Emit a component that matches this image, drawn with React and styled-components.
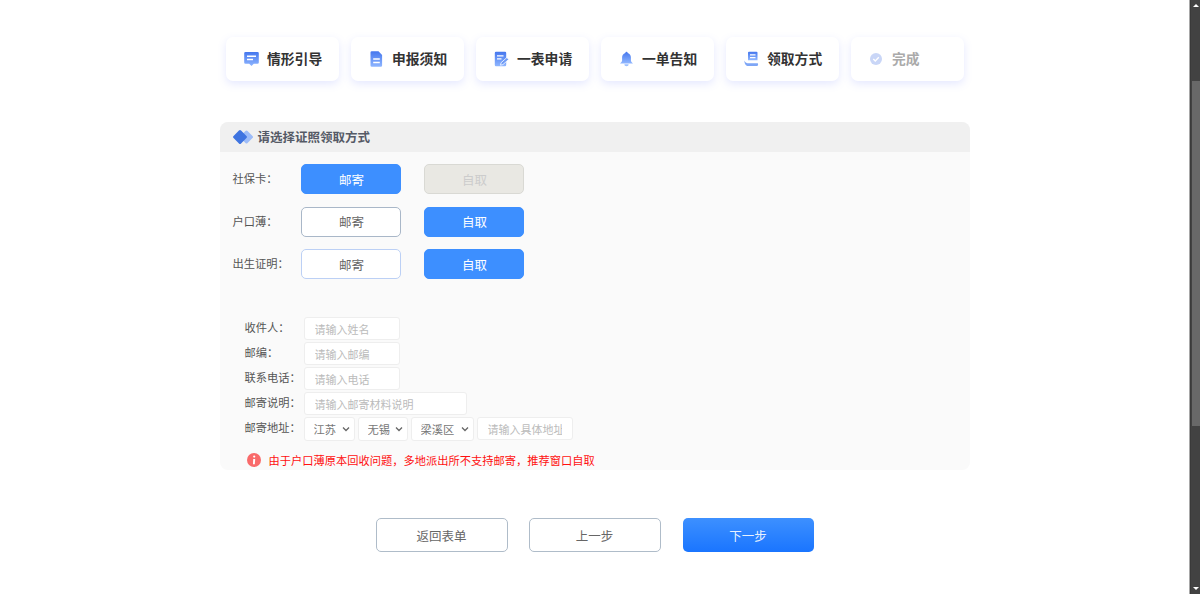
import React from 'react'
import styled, { createGlobalStyle } from 'styled-components'

const GlobalStyle = createGlobalStyle`
  html, body {
    margin: 0;
    padding: 0;
    height: 594px;
    overflow: hidden;
    background: #fff;
    font-family: "Noto Sans CJK SC", "Noto Sans", sans-serif;
  }
  * { box-sizing: border-box; }
`

const chevron = `url("data:image/svg+xml,%3Csvg xmlns='http://www.w3.org/2000/svg' width='8' height='6' viewBox='0 0 8 6'%3E%3Cpath d='M1 1.500l3 3 3-3' fill='none' stroke='%23666' stroke-width='1.300'/%3E%3C/svg%3E")`

const Page = styled.div`
  display: flex;
  width: 1200px;
  height: 594px;
`

const Main = styled.main`
  flex: 1;
  display: flex;
  flex-direction: column;
  align-items: center;
  padding-top: 37px;
  border-right: 1px solid #a8a8a8;
`

const Steps = styled.div`
  display: flex;
  gap: 12px;
  margin-left: 1px;
`

const StepCard = styled.div`
  display: flex;
  align-items: center;
  gap: 8px;
  width: 113px;
  height: 44px;
  padding-left: 18px;
  border-radius: 7px;
  background: #fff;
  box-shadow: 0 3px 8px rgba(110, 130, 255, 0.18);
  font-size: 13.8px;
  font-weight: 700;
  color: ${({ $done }) => ($done ? '#aaa' : '#333')};
  svg { flex: none; width: 15px; height: 16px; }
  span { padding-bottom: 2px; }
`

const Panel = styled.section`
  width: 750px;
  height: 348px;
  margin-top: 41px;
  border-radius: 8px;
  background: #fafafa;
  overflow: hidden;
`

const PanelHead = styled.div`
  display: flex;
  align-items: center;
  gap: 5px;
  height: 30px;
  padding: 0 0 1px 13px;
  background: #f0f0f0;
  font-size: 12.5px;
  font-weight: 700;
  color: #555a66;
`

const Picks = styled.div`
  display: flex;
  flex-direction: column;
  gap: 12.5px;
  padding: 12px 0 0 13px;
`

const PickRow = styled.div`
  display: flex;
  align-items: center;
`

const PickLabel = styled.span`
  width: 68px;
  font-size: 11.25px;
  color: #555;
  position: relative;
  top: -1px;
`

const Pick = styled.button`
  width: 100px;
  height: 30px;
  margin-right: 23px;
  padding: 0 0 0 2px;
  border-radius: 5px;
  font-family: inherit;
  font-size: 12.5px;
  border: 1px solid ${({ $variant, $line }) =>
    $variant === 'on' ? '#3d8fff' : $variant === 'off' ? '#d9d9d4' : $line || '#a9b7c8'};
  background: ${({ $variant }) =>
    $variant === 'on' ? '#3d8fff' : $variant === 'off' ? '#e9e8e3' : '#fff'};
  color: ${({ $variant }) =>
    $variant === 'on' ? '#fff' : $variant === 'off' ? '#ccc' : '#666'};
`

const Form = styled.div`
  display: flex;
  flex-direction: column;
  gap: 2px;
  margin-top: 38px;
  padding-left: 25px;
`

const FormRow = styled.div`
  display: flex;
  align-items: center;
  gap: 3px;
  height: 23px;
`

const FormLabel = styled.label`
  width: 59px;
  margin-right: -3px;
  font-size: 11.25px;
  white-space: nowrap;
  color: #555;
  position: relative;
  top: -2px;
`

const Field = styled.input`
  width: ${({ $w }) => $w || 96}px;
  height: 23px;
  padding: 0 10px;
  border: 1px solid #eee;
  border-radius: 3px;
  background: #fff;
  font-family: inherit;
  font-size: 11px;
  outline: none;
  &::placeholder { color: #bbb; opacity: 1; }
`

const AreaSelect = styled.select`
  appearance: none;
  width: ${({ $w }) => $w}px;
  height: 24px;
  padding-left: 9px;
  border: 1px solid #eee;
  border-radius: 3px;
  background: #fff ${chevron} no-repeat right 4px center;
  font-family: inherit;
  font-size: 11.25px;
  color: #777;
`

const Notice = styled.div`
  display: flex;
  align-items: center;
  gap: 8px;
  margin-top: 10px;
  padding-left: 2px;
  font-size: 11.25px;
  color: #ff1010;
`

const Actions = styled.div`
  display: flex;
  gap: 21px;
  margin-top: 48px;
`

const ActionButton = styled.button`
  width: ${({ $primary }) => ($primary ? 131 : 132)}px;
  height: 34px;
  margin-left: ${({ $primary }) => ($primary ? 1 : 0)}px;
  padding: 0;
  border-radius: 5px;
  font-family: inherit;
  font-size: 12.5px;
  color: ${({ $primary }) => ($primary ? '#e8f1ff' : '#666')};
  border: ${({ $primary }) => ($primary ? 'none' : '1px solid #afbcc9')};
  background: ${({ $primary }) =>
    $primary ? 'linear-gradient(180deg, #3d90ff 0%, #1a75ff 100%)' : '#fff'};
`

const ScrollTrack = styled.aside`
  flex: none;
  display: flex;
  flex-direction: column;
  align-items: center;
  width: 10px;
  background: #424242;
  border-left: 1px solid #3a3a3a;
`

const ScrollArrow = styled.div`
  width: 0;
  height: 0;
  margin: 4px 0;
  border-left: 3px solid transparent;
  border-right: 3px solid transparent;
  ${({ $down }) => ($down ? 'border-top: 3px solid #fff;' : 'border-bottom: 3px solid #fff;')}
`

const ScrollThumb = styled.div`
  width: 8px;
  height: 345px;
  margin-top: 70px;
  margin-bottom: auto;
  background: #686868;
`

const Grad = ({ id, from = '#4577ee', to = '#8fb6ff' }) => (
  <defs>
    <linearGradient id={id} x1="0" y1="0" x2="0" y2="1">
      <stop offset="0" stopColor={from} />
      <stop offset="1" stopColor={to} />
    </linearGradient>
  </defs>
)

const icons = {
  talk: (
    <svg viewBox="0 0 15 16">
      <Grad id="g1" />
      <path d="M1.500 1h12a1.300 1.300 0 0 1 1.300 1.300v9.200a1.300 1.300 0 0 1-1.300 1.300H9.800l-2.300 2.300-2.300-2.300H1.500A1.300 1.300 0 0 1 .2 11.500V2.300A1.300 1.300 0 0 1 1.500 1z" fill="url(#g1)" />
      <path d="M3 4.500h9v1.400H3zM3 7.800h6v1.400H3z" fill="#fff" />
    </svg>
  ),
  doc: (
    <svg viewBox="0 0 15 16">
      <Grad id="g2" />
      <path d="M2.800 .3h6.700l3.600 3.600v10.500a1.300 1.300 0 0 1-1.300 1.300H2.800a1.300 1.300 0 0 1-1.300-1.300V1.600A1.300 1.300 0 0 1 2.800 .3z" fill="url(#g2)" />
      <path d="M4.200 7.300h6.600v1.400H4.200zM4.200 10.800h6.600v1.400H4.200z" fill="#fff" />
    </svg>
  ),
  form: (
    <svg viewBox="0 0 15 16">
      <Grad id="g3" />
      <path d="M2 .8h9a1.200 1.200 0 0 1 1.200 1.200v12a1.200 1.200 0 0 1-1.200 1.200H2A1.200 1.200 0 0 1 .8 14V2A1.200 1.200 0 0 1 2 .8z" fill="url(#g3)" />
      <path d="M3 4.300h6.500v1.300H3zM3 7.300h4.500v1.300H3z" fill="#fff" />
      <path d="M6.500 14.200l.6-2.500 5.800-5.200 1.800 1.900-5.800 5.200z" fill="#6f9bf5" stroke="#fff" strokeWidth=".8" />
    </svg>
  ),
  bell: (
    <svg viewBox="0 0 15 16">
      <Grad id="g4" />
      <path d="M7.500 .8c.7 0 1.100.4 1.200 1.100 2.100.6 3.200 2.300 3.200 4.400v3.100c0 1 1 1.800 2.100 3H1c1.100-1.200 2.100-2 2.100-3V6.300c0-2.100 1.100-3.800 3.200-4.400C6.400 1.200 6.800 .8 7.500 .8z" fill="url(#g4)" />
      <path d="M5.300 13.200h4.400a2.200 2 0 0 1-4.400 0z" fill="#9cc0ff" />
    </svg>
  ),
  hand: (
    <svg viewBox="0 0 15 16">
      <Grad id="g5" />
      <path d="M5 .8h7.500a1 1 0 0 1 1 1v7.400H4V1.800a1 1 0 0 1 1-1z" fill="url(#g5)" />
      <path d="M6 3.300h5.500v1.200H6zM6 6h5.500v1.200H6z" fill="#fff" />
      <path d="M.5 9.500c.7 2.300 2.300 2.800 4.500 2.800h8.500c.9 0 .9 2.800-.6 2.800H4.500C2 15.100.2 13 .5 9.500z" fill="#7ea6f6" />
    </svg>
  ),
  done: (
    <svg viewBox="0 0 15 16">
      <circle cx="7" cy="8" r="6" fill="#c9d6f7" />
      <path d="M4.300 8l2 2 3.500-3.700" fill="none" stroke="#fff" strokeWidth="1.400" />
    </svg>
  ),
}

const steps = [
  { text: '情形引导', icon: icons.talk },
  { text: '申报须知', icon: icons.doc },
  { text: '一表申请', icon: icons.form },
  { text: '一单告知', icon: icons.bell },
  { text: '领取方式', icon: icons.hand },
  { text: '完成', icon: icons.done, done: true },
]

const picks = [
  { label: '社保卡：', post: 'on', self: 'off' },
  { label: '户口薄：', post: 'plain', self: 'on' },
  { label: '出生证明：', post: 'plain', self: 'on', line: '#bcd0f5' },
]

const fields = [
  { label: '收件人：', hint: '请输入姓名' },
  { label: '邮编：', hint: '请输入邮编' },
  { label: '联系电话：', hint: '请输入电话' },
  { label: '邮寄说明：', hint: '请输入邮寄材料说明', w: 163 },
]

export default function App() {
  return (
    <>
      <GlobalStyle />
      <Page>
        <Main>
          <Steps>
            {steps.map((item) => (
              <StepCard key={item.text} $done={item.done}>
                {item.icon}
                <span>{item.text}</span>
              </StepCard>
            ))}
          </Steps>

          <Panel>
            <PanelHead>
              <svg width="20" height="16" viewBox="0 0 20 16">
                <rect x="8.500" y="3" width="10" height="10" rx="1.500" transform="rotate(45 13.500 8)" fill="#9dbcf8" />
                <rect x="1.700" y="2.700" width="10.600" height="10.600" rx="1.500" transform="rotate(45 7 8)" fill="#3f74e0" />
              </svg>
              请选择证照领取方式
            </PanelHead>

            <Picks>
              {picks.map((row) => (
                <PickRow key={row.label}>
                  <PickLabel>{row.label}</PickLabel>
                  <Pick $variant={row.post} $line={row.line}>邮寄</Pick>
                  <Pick $variant={row.self}>自取</Pick>
                </PickRow>
              ))}
            </Picks>

            <Form>
              {fields.map((item) => (
                <FormRow key={item.label}>
                  <FormLabel>{item.label}</FormLabel>
                  <Field placeholder={item.hint} $w={item.w} />
                </FormRow>
              ))}
              <FormRow>
                <FormLabel>邮寄地址：</FormLabel>
                <AreaSelect $w={51}><option>江苏</option></AreaSelect>
                <AreaSelect $w={50}><option>无锡</option></AreaSelect>
                <AreaSelect $w={63}><option>梁溪区</option></AreaSelect>
                <Field placeholder="请输入具体地址" />
              </FormRow>
              <Notice>
                <svg width="14" height="14" viewBox="0 0 14 14">
                  <circle cx="7" cy="7" r="7" fill="#f96a6a" />
                  <circle cx="7.200" cy="3.600" r="1.100" fill="#fff" />
                  <path d="M6.200 6h2l-.4 5.200H6z" fill="#fff" />
                </svg>
                由于户口薄原本回收问题，多地派出所不支持邮寄，推荐窗口自取
              </Notice>
            </Form>
          </Panel>

          <Actions>
            <ActionButton>返回表单</ActionButton>
            <ActionButton>上一步</ActionButton>
            <ActionButton $primary>下一步</ActionButton>
          </Actions>
        </Main>

        <ScrollTrack>
          <ScrollArrow />
          <ScrollThumb />
          <ScrollArrow $down />
        </ScrollTrack>
      </Page>
    </>
  )
}
